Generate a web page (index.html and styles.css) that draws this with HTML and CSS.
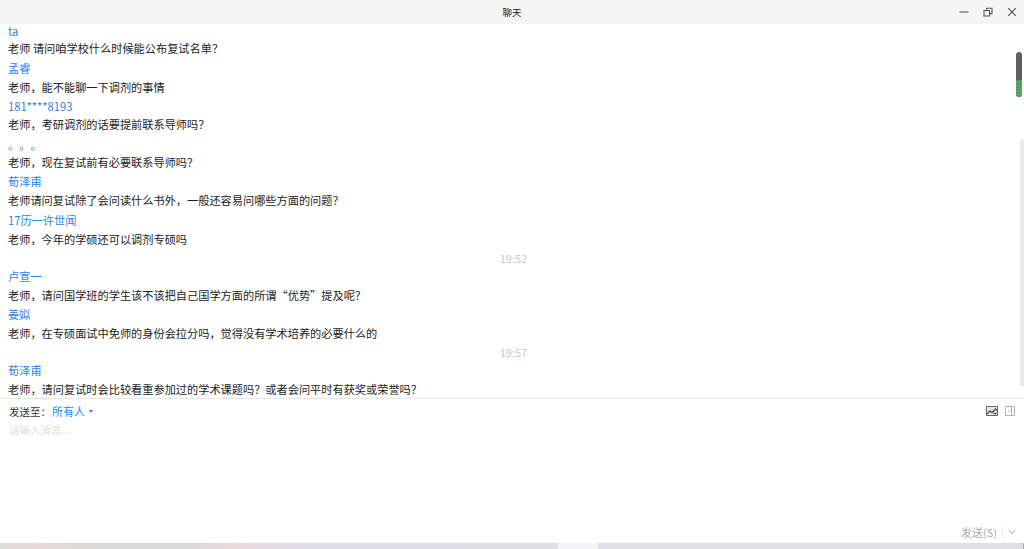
FILE: index.html
```html
<!DOCTYPE html>
<html lang="zh-CN">
<head>
<meta charset="utf-8">
<title>聊天</title>
<link rel="stylesheet" href="styles.css">
</head>
<body>
<div class="window">
  <header class="titlebar">
    <span class="title">聊天</span>
    <div class="controls">
      <svg width="12" height="12" viewBox="0 0 12 12"><path d="M1.5 6h9" stroke="#666" stroke-width="1.2"/></svg>
      <svg width="12" height="12" viewBox="0 0 12 12"><path d="M2 4.5h5.5V10H2zM4.5 4.5V2.2H10v5.4H7.5" fill="none" stroke="#555" stroke-width="1.1"/></svg>
      <svg width="12" height="12" viewBox="0 0 12 12"><path d="M2.2 2.2l7.6 7.6M9.8 2.2l-7.6 7.6" stroke="#555" stroke-width="1.2"/></svg>
    </div>
  </header>
  <main class="messages">
    <div class="log">
      <p class="name">ta</p><p class="msg g0">老师 请问咱学校什么时候能公布复试名单&#xFF1F;</p>
      <p class="name g3">孟睿</p><p class="msg g2">老师&#xFF0C;能不能聊一下调剂的事情</p>
      <p class="name g2">181****8193</p><p class="msg g1">老师&#xFF0C;考研调剂的话要提前联系导师吗&#xFF1F;</p>
      <p class="name dots g4">&#x3002;&#x3002;&#x3002;</p><p class="msg g0">老师&#xFF0C;现在复试前有必要联系导师吗&#xFF1F;</p>
      <p class="name g2">荀泽甫</p><p class="msg g2">老师请问复试除了会问读什么书外&#xFF0C;一般还容易问哪些方面的问题&#xFF1F;</p>
      <p class="name g3">17历一许世闻</p><p class="msg g2">老师&#xFF0C;今年的学硕还可以调剂专硕吗</p>
      <p class="time g2">19:52</p>
      <p class="name g1">卢宣一</p><p class="msg g2">老师&#xFF0C;请问国学班的学生该不该把自己国学方面的所谓&#x201C;优势&#x201D;提及呢&#xFF1F;</p>
      <p class="name g2">姜姒</p><p class="msg g2">老师&#xFF0C;在专硕面试中免师的身份会拉分吗&#xFF0C;觉得没有学术培养的必要什么的</p>
      <p class="time g2">19:57</p>
      <p class="name g1">荀泽甫</p><p class="msg g2">老师&#xFF0C;请问复试时会比较看重参加过的学术课题吗&#xFF1F;或者会问平时有获奖或荣誉吗&#xFF1F;</p>
    </div>
    <div class="scroll-track"></div>
    <div class="scroll-thumb"><div class="scroll-green"></div></div>
  </main>
  <section class="composer">
    <div class="composer-top">
      <div class="target">
        <span class="label">发送至&#xFF1A;</span>
        <span class="everyone">所有人</span>
        <span class="caret"></span>
      </div>
      <div class="tools">
        <svg width="12" height="10" viewBox="0 0 12 10"><path d="M.5.5h11v9H.5z" fill="#e4e4e4" stroke="#666"/><path d="M1 8l3-3 2 1.5L9.5 3 11 4.5M7.5 7.5h3" fill="none" stroke="#555" stroke-width="1.4"/></svg>
        <svg width="10" height="10" viewBox="0 0 10 10"><path d="M.5.5h9v9H.5zM6.5.5v9M3 5h2" fill="none" stroke="#b0b0b0"/></svg>
      </div>
    </div>
    <div class="placeholder">请输入消息...</div>
    <div class="send-row">
      <span class="send">发送(S)</span>
      <svg class="chev" width="8" height="6" viewBox="0 0 8 6"><path d="M1 1.5l3 3 3-3" fill="none" stroke="#999"/></svg>
    </div>
  </section>
  <footer class="taskbar"><div class="tb-left"></div><div class="tb-gap"></div><div class="tb-right"></div></footer>
</div>
</body>
</html>
```
FILE: styles.css
```css
* { box-sizing: border-box; margin: 0; padding: 0; }
html, body { width: 1024px; height: 549px; overflow: hidden; background: #fff; }
body { font-family: "Noto Sans CJK SC", "Liberation Sans", sans-serif; font-size: 11.2px; color: #222; }
.window { display: flex; flex-direction: column; height: 549px; }
.titlebar { height: 24px; flex: none; background: #f5f5f5; display: flex; align-items: center; justify-content: center; position: relative; }
.title { font-size: 9.5px; color: #222; }
.controls { position: absolute; right: 6px; top: 6px; display: flex; gap: 12px; }
.messages { height: 375px; flex: none; position: relative; overflow: hidden; border-bottom: 1px solid #e6e6e6; }
.log { margin-top: -1px; }
.log p { height: 17px; line-height: 17px; white-space: nowrap; padding-left: 8px; }
.log .g0 { margin-top: 0; }
.log .g1 { margin-top: 1px; }
.log .g2 { margin-top: 2px; }
.log .g3 { margin-top: 3px; }
.log .g4 { margin-top: 4px; }
.name { color: #2a85ea; }
.dots { text-spacing-trim: space-all; font-feature-settings: "halt" 0, "chws" 0; letter-spacing: 0; }
.msg { color: #222; }
.log .time { color: #c8c8c8; text-align: center; padding-left: 3px; font-size: 11px; }
.scroll-track { position: absolute; right: 0; top: 115px; bottom: 12px; width: 4px; background: #e9e9e9; border-radius: 2px 0 0 2px; }
.scroll-thumb { position: absolute; right: 2px; top: 28px; width: 6px; height: 45px; background: #5f5f5f; border-radius: 3px; overflow: hidden; }
.scroll-green { position: absolute; left: 0; right: 0; bottom: 0; height: 17px; background: repeating-linear-gradient(180deg, #4f9a5f 0 2px, #6aa877 2px 3px); }
.composer { flex: 1; display: flex; flex-direction: column; min-height: 0; }
.composer-top { height: 24px; flex: none; display: flex; align-items: center; justify-content: space-between; padding: 0 9px; }
.target { display: flex; align-items: center; }
.label { font-size: 10.5px; color: #333; width: 43px; }
.everyone { font-size: 11px; color: #2a85ea; }
.caret { margin-left: 4px; width: 0; height: 0; border-left: 2.5px solid transparent; border-right: 2.5px solid transparent; border-top: 3px solid #2a85ea; }
.tools { display: flex; gap: 7px; align-items: center; }
.placeholder { font-size: 10.5px; color: #dedede; padding-left: 9px; line-height: 14px; flex: 1; }
.send-row { height: 22px; flex: none; display: flex; align-items: center; justify-content: flex-end; padding-right: 8px; }
.send { font-size: 11px; color: #aaa; padding-right: 5px; border-right: 1px solid #eee; margin-right: 5px; }
.chev { display: block; }
.taskbar { height: 6px; flex: none; display: flex; background: #e0dee6; border-right: 1px solid #aaa; }
.tb-left { width: 558px; background: linear-gradient(90deg, #ddd 0, #e8d9d6 6%, #d9d9d9 18%, #d9d9d9 33%, #e8dadd 42%, #dfdde8 55%, #e0dde6 100%); }
.tb-gap { width: 40px; background: #f4f3f6; }
.tb-right { flex: 1; }
```
